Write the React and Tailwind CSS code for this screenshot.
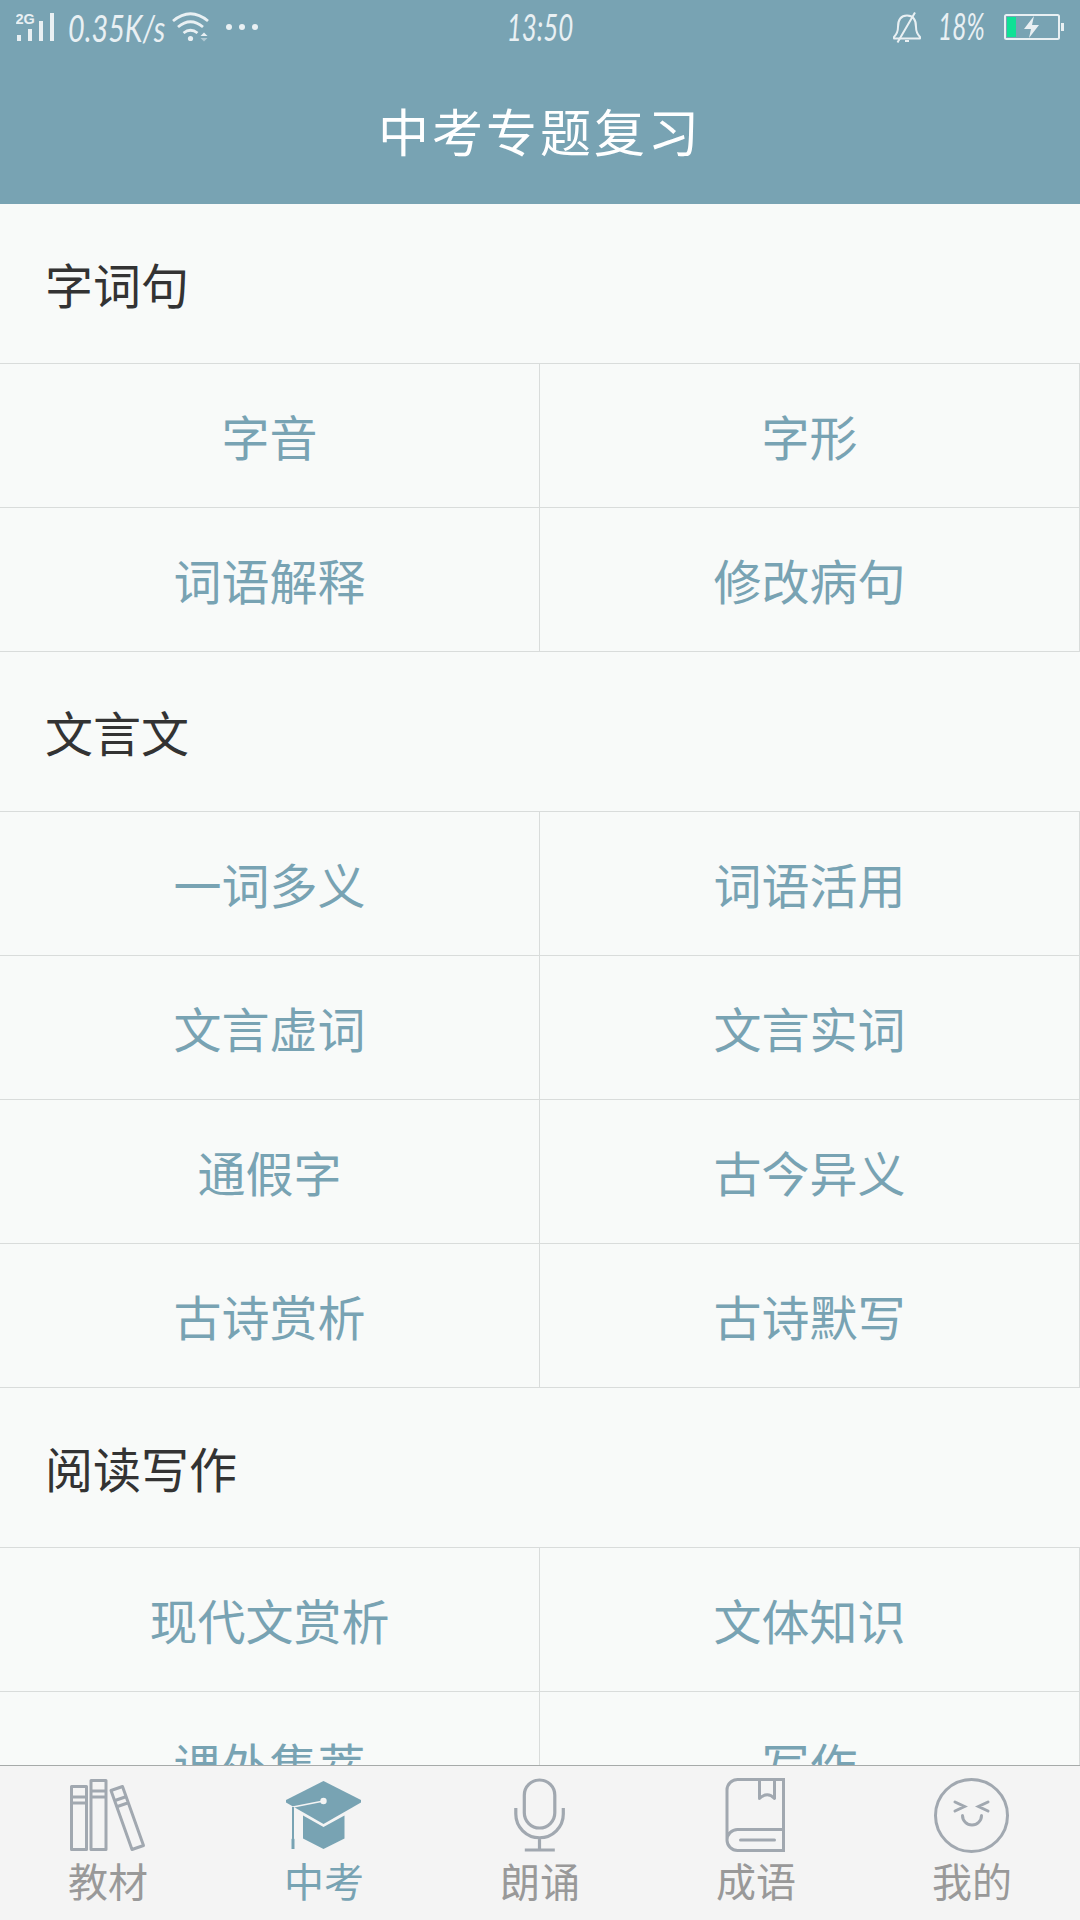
import { useState } from "react";

const sections = [
    {
        title: "字词句",
        items: ["字音", "字形", "词语解释", "修改病句"],
    },
    {
        title: "文言文",
        items: ["一词多义", "词语活用", "文言虚词", "文言实词", "通假字", "古今异义", "古诗赏析", "古诗默写"],
    },
    {
        title: "阅读写作",
        items: ["现代文赏析", "文体知识", "课外集萃", "写作"],
    },
];

const tabs = [
    { name: "教材", icon: BooksIcon },
    { name: "中考", icon: CapIcon },
    { name: "朗诵", icon: MicIcon },
    { name: "成语", icon: BookIcon },
    { name: "我的", icon: SmileIcon },
];

function BooksIcon() {
    return (
        <svg width="76" height="76" viewBox="0 0 76 76" fill="none" stroke="currentColor" strokeWidth="3" strokeLinejoin="round">
            <path d="M1.5 8.5h15v63h-15zM1.5 19h15M1.5 25h15" />
            <path d="M21 2.500h15v69H21zM21 13h15M21 19h15" />
            <path d="M41 12.500l11.500-4L73.500 67.500l-11.500 4zM45 22.500l11.500-4M47.500 28.500l11.500-4" />
        </svg>
    );
}

function CapIcon() {
    return (
        <svg width="76" height="76" viewBox="0 0 76 76" fill="currentColor">
            <path d="M37.500 3L75 22v2.500L37.500 46 0 24.500V22z" />
            <path d="M17 37.500L37.500 49l21-11.500v23L37.500 71 17 60.500z" />
            <path d="M37.500 23L7 29" stroke="#f4f4f4" strokeWidth="1.600" />
            <circle cx="37.500" cy="23" r="3.200" fill="#f4f4f4" />
            <path d="M6 29h2v31.500H6zM5.500 61q1.500-1.500 3 0v10h-3z" />
        </svg>
    );
}

function MicIcon() {
    return (
        <svg width="76" height="76" viewBox="0 0 76 76" fill="none" stroke="currentColor" strokeWidth="3.200">
            <rect x="22.300" y="2" width="30.500" height="48" rx="15.250" />
            <path d="M13.800 30v6a23.750 23.750 0 0 0 47.500 0v-6M37.500 60v11M22.800 72h30" />
        </svg>
    );
}

function BookIcon() {
    return (
        <svg width="76" height="76" viewBox="0 0 76 76" fill="none" stroke="currentColor" strokeWidth="3">
            <path d="M65.500 1.500H19.500a10.500 10.500 0 0 0-10.500 10.500v50a10.500 10.500 0 0 0 10.500 10.500h46V0M9 62a10.500 10.500 0 0 1 10.500-10.500h46" />
            <path d="M41.500 2v18.500q8-7.500 15 0V2" strokeLinejoin="round" />
            <path d="M22.500 62h34" strokeLinecap="round" />
        </svg>
    );
}

function SmileIcon() {
    return (
        <svg width="76" height="76" viewBox="0 0 76 76" fill="none" stroke="currentColor" strokeWidth="3" strokeLinecap="round">
            <circle cx="37.500" cy="37.500" r="36" />
            <path d="M21 24l9.500 4.500L21 33M54 24l-9.500 4.500L54 33M28.500 37.500a9.500 9.500 0 0 0 19 0" />
        </svg>
    );
}

function StatusBar() {
    return (
        <div className="grid h-14 grid-cols-3 items-center text-[#e9f0f3]">
            <div className="flex h-14 items-center pl-4">
                <svg width="40" height="56" viewBox="0 0 40 56" fill="currentColor">
                    <text x="-0.5" y="24" fontSize="14.500" fontWeight="700" fontFamily="Liberation Sans, sans-serif">2G</text>
                    <path d="M1 35h4v6H1zM12 29h4v12h-4zM23 21h4v20h-4zM34 13h4v28h-4z" />
                </svg>
                <span className="ml-3 w-[104px] origin-left scale-x-[0.8] whitespace-nowrap font-[Lato,sans-serif] text-[36px] italic leading-[52px]">0.35K/s</span>
                <svg className="shrink-0" width="86" height="56" viewBox="172 0 86 56" fill="none" stroke="currentColor" strokeWidth="2.800">
                    <path d="M173 21q17.500-14.500 35 0M178 27q12.500-10.500 25 0M183.500 33q7-5.500 14 0" />
                    <circle cx="190.500" cy="38.500" r="2.600" fill="currentColor" stroke="none" />
                    <path d="M200.500 36l3.500-3.500 3.500 3.500z" fill="currentColor" stroke="none" />
                    <path d="M200.500 38l3.500 3.500 3.500-3.500z" fill="currentColor" stroke="none" opacity="0.500" />
                    <g fill="currentColor" stroke="none">
                        <circle cx="229" cy="27" r="3" />
                        <circle cx="242" cy="27" r="3" />
                        <circle cx="255" cy="27" r="3" />
                    </g>
                </svg>
            </div>
            <div className="h-14 scale-x-[0.72] text-center font-[Lato,sans-serif] text-[36px] italic leading-[54px]">13:50</div>
            <div className="flex h-14 items-center justify-end pr-4">
                <svg width="30" height="56" viewBox="892 0 30 56" fill="none" stroke="currentColor" strokeWidth="2">
                    <path d="M894 38.500v-1.500q4-4 4-10 0-11.500 9-11.500t9 11.500q0 6 4 10v1.500z" strokeLinejoin="round" />
                    <path d="M897.500 42.500L915 12.500M905 41h4" />
                </svg>
                <span className="ml-4 h-14 w-[66px] origin-left scale-x-[0.68] whitespace-nowrap font-[Lato,sans-serif] text-[36px] italic leading-[53px]">18%</span>
                <svg width="60" height="56" viewBox="1004 0 60 56">
                    <rect x="1005" y="15" width="54" height="24" rx="1.500" fill="none" stroke="currentColor" strokeWidth="2" />
                    <path d="M1007 17h9v20h-9z" fill="#0fe195" />
                    <path d="M1061 23h3v8h-3z" fill="currentColor" />
                    <path d="M1034 16l-10 13h7l-2 9 10-13h-7z" fill="currentColor" />
                </svg>
            </div>
        </div>
    );
}

export default function App() {
    const [active, setActive] = useState("中考");

    return (
        <div className="flex h-[1920px] w-[1080px] flex-col overflow-hidden bg-[#f8faf9] font-['Noto_Sans_CJK_SC',sans-serif]">
            <header className="h-[204px] shrink-0 bg-[#78a3b3]">
                <StatusBar />
                <h1 className="text-center text-[51px] leading-[148px] tracking-[3px] text-white">中考专题复习</h1>
            </header>

            <main className="min-h-0 flex-1 overflow-hidden">
                {sections.map((section) => (
                    <section key={section.title}>
                        <h2 className="h-[159px] pl-[45px] text-[48px] leading-[159px] text-[#333333]">
                            {section.title}
                        </h2>
                        <div className="grid grid-cols-2 border-t border-[#d9dcdb]">
                            {section.items.map((item) => (
                                <div key={item} className="h-36 border-b border-r border-[#d9dcdb] text-center text-[48px] leading-[143px] text-[#78a3b3]">
                                    {item}
                                </div>
                            ))}
                        </div>
                    </section>
                ))}
            </main>

            <nav className="grid h-[155px] shrink-0 grid-cols-5 border-t border-[#a6aaa9] bg-[#f4f4f4]">
                {tabs.map(({ name, icon: Icon }) => (
                    <button
                        key={name}
                        onClick={() => setActive(name)}
                        className={active === name ? "flex flex-col items-center pt-3 text-[#78a3b3]" : "flex flex-col items-center pt-3 text-[#a1a8b0]"}
                    >
                        <Icon />
                        <span className={active === name ? "text-[40px] leading-[52px]" : "text-[40px] leading-[52px] text-[#999999]"}>
                            {name}
                        </span>
                    </button>
                ))}
            </nav>
        </div>
    );
}
